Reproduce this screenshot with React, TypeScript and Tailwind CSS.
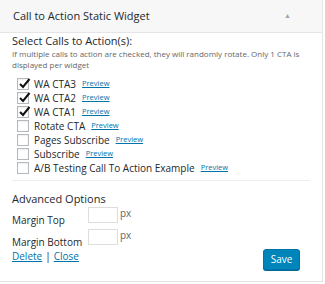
const items = [
  { label: "WA CTA3", checked: true },
  { label: "WA CTA2", checked: true },
  { label: "WA CTA1", checked: true },
  { label: "Rotate CTA", checked: false },
  { label: "Pages Subscribe", checked: false },
  { label: "Subscribe", checked: false },
  { label: "A/B Testing Call To Action Example", checked: false },
];

function Box({ checked }: { checked: boolean }) {
  return (
    <span className="relative flex h-[12px] w-[12px] shrink-0 items-center justify-center border border-[#b4b9be] bg-white shadow-[inset_0_1px_2px_rgba(0,0,0,0.07)]">
      {checked && (
        <svg className="absolute left-[1px] top-[-1px]" width="12" height="11" viewBox="0 0 12 11">
          <path d="M1 6 L4 9 L10.5 1" fill="none" stroke="#111" strokeWidth="2" />
        </svg>
      )}
    </span>
  );
}

export default function App() {
  return (
    <div className="h-[284px] w-[325px] bg-white font-['Open_Sans',sans-serif] text-[#23282d]">
      <div className="flex h-[282px] w-[323px] flex-col border-r border-b border-[#e5e5e5]">
        <div className="flex h-[33px] items-center justify-between border-b border-[#e5e5e5] bg-[#f7f7f7] pl-[13px] pr-[31px]">
          <span className="text-[11px] font-medium">Call to Action Static Widget</span>
          <span className="text-[7px] text-[#a0a5aa]">▲</span>
        </div>
        <div className="flex flex-1 flex-col px-[12px]">
          <div className="text-[11px] leading-[15px]">Select Calls to Action(s):</div>
          <div className="text-[8px] leading-[11px] text-[#666]">
            If multiple calls to action are checked, they will randomly rotate. Only 1 CTA is displayed per widget
          </div>
          <div className="mt-[7px] flex flex-col pl-[5px]">
            {items.map((it) => (
              <div key={it.label} className="flex h-[14px] items-center">
                <Box checked={it.checked} />
                <span className="ml-[5px] text-[10px]">{it.label}</span>
                <a className="ml-[6px] text-[7.5px] text-[#0073aa] underline">Preview</a>
              </div>
            ))}
          </div>
          <div className="mt-[5px] border-t border-[#eee]" />
          <div className="mt-[10px] text-[11px] leading-[15px]">Advanced Options</div>
          <div className="mt-[1px] flex items-start">
            <span className="mt-[6px] w-[76px] text-[10px] leading-[14px]">Margin Top</span>
            <span className="h-[16px] w-[30px] border border-[#ddd] bg-white" />
            <span className="ml-[2px] text-[10px] leading-[12px] text-[#666]">px</span>
          </div>
          <div className="mt-[2px] flex items-start">
            <span className="mt-[6px] w-[76px] text-[10px] leading-[14px]">Margin Bottom</span>
            <span className="h-[16px] w-[30px] border border-[#ddd] bg-white" />
            <span className="ml-[2px] text-[10px] leading-[12px] text-[#666]">px</span>
          </div>
          <div className="flex items-start justify-between pr-[10px]">
            <div className="text-[10px] leading-[14px]">
              <a className="text-[#0073aa] underline">Delete</a>
              <span className="mx-[3px]">|</span>
              <a className="text-[#0073aa] underline">Close</a>
            </div>
            <button className="mt-0 h-[21px] w-[37px] rounded-[3px] border border-[#0073aa] bg-[#0085ba] text-[10px] text-white shadow-[0_1px_0_#006799]">
              Save
            </button>
          </div>
        </div>
      </div>
    </div>
  );
}
